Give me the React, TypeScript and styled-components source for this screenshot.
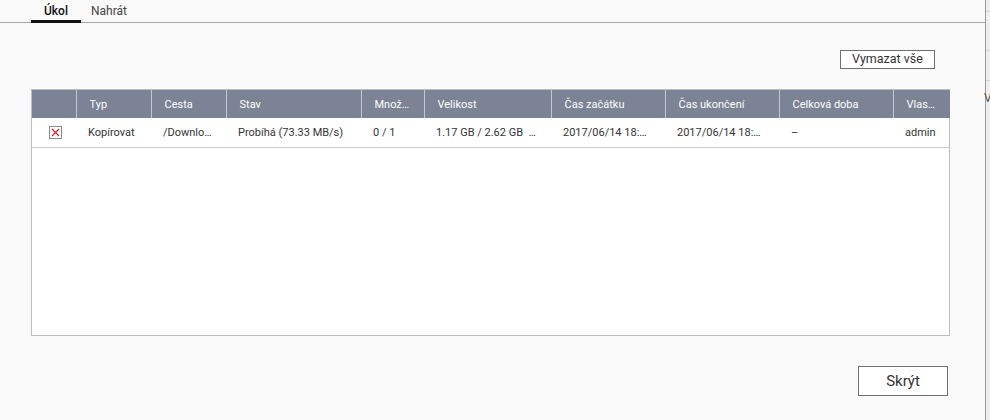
import styled, { createGlobalStyle } from 'styled-components'

const GlobalStyle = createGlobalStyle`
  html, body {
    margin: 0;
    padding: 0;
    background: #ececec;
    font-family: Roboto, "Liberation Sans", Arial, sans-serif;
    color: #333;
  }
`

const Screen = styled.div`
  display: flex;
  width: 990px;
  height: 420px;
  overflow: hidden;
`

const Panel = styled.div`
  width: 985px;
  flex: none;
  background: #f9f9f9;
  border-right: 1px solid #9c9c9c;
  display: flex;
  flex-direction: column;
`

const Backdrop = styled.div`
  flex: 1;
  display: flex;
  flex-direction: column;
  background: #efefef;
`

const BackdropLine = styled.div<{ $h: number }>`
  height: ${({ $h }) => $h}px;
  border-bottom: 1px solid #d0d0d0;
`

const BackdropGlyph = styled.div`
  font-size: 12px;
  line-height: 14px;
  color: #555;
  margin-top: 10px;
  margin-left: -2px;
`

const TabBar = styled.div`
  display: flex;
  align-items: flex-end;
  height: 22px;
  padding-left: 31px;
  border-bottom: 1px solid #a8a8a8;
`

const Tab = styled.div<{ $active?: boolean }>`
  height: 20px;
  min-width: 50px;
  padding: 0 10px;
  box-sizing: border-box;
  text-align: center;
  font-size: 12px;
  line-height: 16px;
  color: ${({ $active }) => ($active ? '#111' : '#444')};
  font-weight: ${({ $active }) => ($active ? 500 : 400)};
  border-bottom: 3px solid ${({ $active }) => ($active ? '#111' : 'transparent')};
  margin-bottom: -1px;
`

const Content = styled.div`
  flex: 1;
  display: flex;
  flex-direction: column;
  padding: 27px 35px 24px 31px;
`

const Toolbar = styled.div`
  display: flex;
  justify-content: flex-end;
  padding-right: 15px;
  margin-bottom: 20px;
`

const Button = styled.button<{ $large?: boolean }>`
  background: #fff;
  border: 1px solid #6f6f6f;
  border-radius: 0;
  color: #333;
  font-family: Roboto, "Liberation Sans", Arial, sans-serif;
  font-size: ${({ $large }) => ($large ? '15px' : '12.5px')};
  width: ${({ $large }) => ($large ? '90px' : '95px')};
  height: ${({ $large }) => ($large ? '30px' : '19px')};
  padding: 0;
  line-height: 1;
  cursor: pointer;
`

const TableBox = styled.div`
  height: 247px;
  border: 1px solid #bdbdbd;
  background: #fff;
  box-sizing: border-box;
`

const Table = styled.table`
  width: 100%;
  border-collapse: collapse;
  table-layout: fixed;
  font-size: 11px;
`

const Th = styled.th`
  height: 28px;
  padding: 0 14px 0 13px;
  background: #7b8395;
  color: #fff;
  font-weight: 400;
  text-align: left;
  white-space: nowrap;
  overflow: hidden;
  text-overflow: ellipsis;
  border-left: 1px solid #c3c7d0;
  &:first-child {
    border-left: none;
  }
`

const Td = styled.td<{ $center?: boolean }>`
  height: 29px;
  padding: 0 14px 0 12px;
  text-align: ${({ $center }) => ($center ? 'center' : 'left')};
  white-space: nowrap;
  overflow: hidden;
  text-overflow: ellipsis;
  border-bottom: 1px solid #c8c8c8;
  color: #333;
`

const RemoveBox = styled.span`
  display: inline-flex;
  width: 13px;
  height: 13px;
  box-sizing: border-box;
  border: 1px solid #8a8a8a;
  align-items: center;
  justify-content: center;
  vertical-align: middle;
  margin-left: 4px;
  margin-top: -2px;
`

const Footer = styled.div`
  margin-top: auto;
  display: flex;
  justify-content: flex-end;
  padding-right: 2px;
`

const columns = [
  { label: '', width: 44 },
  { label: 'Typ', width: 75 },
  { label: 'Cesta', width: 75 },
  { label: 'Stav', width: 135 },
  { label: 'Množství', width: 63 },
  { label: 'Velikost', width: 127 },
  { label: 'Čas začátku', width: 114 },
  { label: 'Čas ukončení', width: 114 },
  { label: 'Celková doba', width: 114 },
  { label: 'Vlastník', width: 57 },
]

export default function App() {
  return (
    <>
      <GlobalStyle />
      <Screen>
        <Panel>
          <TabBar>
            <Tab $active>Úkol</Tab>
            <Tab>Nahrát</Tab>
          </TabBar>
          <Content>
            <Toolbar>
              <Button>Vymazat vše</Button>
            </Toolbar>
            <TableBox>
              <Table>
                <colgroup>
                  {columns.map((c, i) => (
                    <col key={i} style={{ width: c.width }} />
                  ))}
                </colgroup>
                <thead>
                  <tr>
                    {columns.map((c, i) => (
                      <Th key={i}>{c.label}</Th>
                    ))}
                  </tr>
                </thead>
                <tbody>
                  <tr>
                    <Td $center>
                      <RemoveBox>
                        <svg width="9" height="9" viewBox="0 0 9 9">
                          <path d="M1 1L8 8M8 1L1 8" stroke="#d9232e" strokeWidth="1.2" />
                        </svg>
                      </RemoveBox>
                    </Td>
                    <Td>Kopírovat</Td>
                    <Td>/Download/Video</Td>
                    <Td>Probíhá (73.33 MB/s)</Td>
                    <Td>0 / 1</Td>
                    <Td>1.17 GB / 2.62 GB&nbsp; (44%)</Td>
                    <Td>2017/06/14 18:32:10</Td>
                    <Td>2017/06/14 18:32:26</Td>
                    <Td>–</Td>
                    <Td>admin</Td>
                  </tr>
                </tbody>
              </Table>
            </TableBox>
            <Footer>
              <Button $large>Skrýt</Button>
            </Footer>
          </Content>
        </Panel>
        <Backdrop>
          <BackdropLine $h={11} />
          <BackdropLine $h={38} />
          <BackdropLine $h={29} />
          <BackdropGlyph>V</BackdropGlyph>
        </Backdrop>
      </Screen>
    </>
  )
}
